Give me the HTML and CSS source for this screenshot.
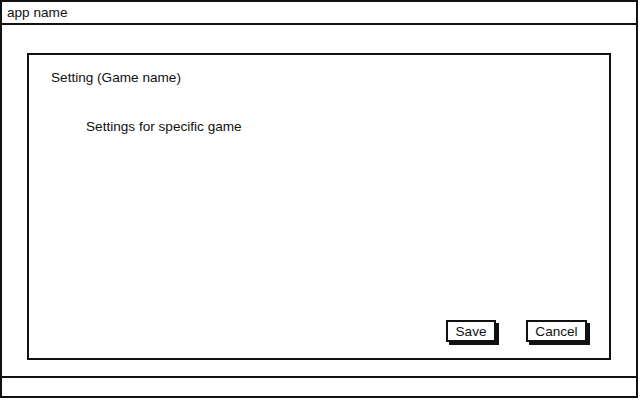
FILE: index.html
```html
<!DOCTYPE html>
<html>
<head>
    <title>Game settings</title>
    <link rel="stylesheet" href="styles.css">
</head>
<body>
    <div class="window">
        <div class="title-bar">app name</div>

        <div class="main">
            <div class="panel">
                <div class="panel-title">Setting (Game name)</div>
                <div class="panel-text">Settings for specific game</div>

                <div class="actions">
                    <button class="btn btn-save">Save</button>
                    <button class="btn btn-cancel">Cancel</button>
                </div>
            </div>
        </div>

        <div class="status-bar"></div>
    </div>
</body>
</html>
```

FILE: styles.css
```css
body{margin: 0;background: #FFF;
    font-family: "Liberation Sans", Arial, sans-serif;
    font-size: 13.6px;
    color: #111;}

.window{
    width: 634px;
    height: 394px;
    border: 2px solid #111;
    display: flex;
    flex-direction: column;
}

.title-bar{
    height: 21px;
    line-height: 21px;
    padding-left: 5px;
    border-bottom: 2px solid #111;
}

.main{
    flex: 1;
    display: flex;
    padding: 28px 25px 16px 25px;
}

.panel{
    flex: 1;
    border: 2px solid #111;
    display: flex;
    flex-direction: column;
    padding: 15px 22px 16px 22px;
}

.panel-title{line-height: 16px;}

.panel-text{
    line-height: 16px;
    margin-top: 33px;
    padding-left: 35px;
}

.actions{
    margin-top: auto;
    display: flex;
    justify-content: flex-end;
    gap: 30px;
}

.btn{
    height: 22px;
    border: 2px solid #111;
    background: #FFF;
    box-shadow: 3px 3px 0px 0px #111;
    font-family: "Liberation Sans", Arial, sans-serif;
    font-size: 13.6px;
    color: #111;
    padding: 0;
}

.btn-save{width: 50px;}
.btn-cancel{width: 61px;}

.status-bar{
    height: 18px;
    border-top: 2px solid #111;
}
```
